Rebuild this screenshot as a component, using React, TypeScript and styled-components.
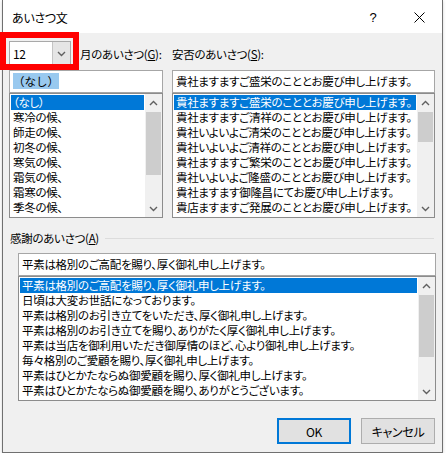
import styled, { createGlobalStyle } from 'styled-components';

const GlobalStyle = createGlobalStyle`
  html, body {
    margin: 0;
    padding: 0;
    background: #ffffff;
  }
  body {
    font-family: "Noto Sans CJK JP", "Noto Sans", sans-serif;
    font-size: 11.5px;
    letter-spacing: -0.3px;
    font-feature-settings: "palt";
    color: #000;
  }
`;

const Frame = styled.div`
  position: relative;
  margin-left: 2px;
  width: 441px;
  height: 453px;
  box-sizing: border-box;
  border: 1px solid #707070;
  border-top: none;
  background: #f0f0f0;
  display: flex;
  flex-direction: column;
  box-shadow: 0 1px 3px rgba(0, 0, 0, 0.18);
`;

const TitleBar = styled.div`
  height: 33px;
  flex-shrink: 0;
  background: #ffffff;
  display: flex;
  align-items: center;
  padding-left: 9px;
`;

const TitleText = styled.div`
  flex: 1;
  line-height: 15px;
  padding-top: 2px;
  font-size: 12px;
`;

const TitleButton = styled.div`
  width: 46px;
  height: 33px;
  display: flex;
  align-items: center;
  justify-content: center;
  font-family: "Liberation Sans", sans-serif;
  font-size: 13px;
  padding-top: 2px;
  box-sizing: border-box;
`;

const Body = styled.div`
  flex: 1;
  display: flex;
  flex-direction: column;
  padding: 8px 6px 8px 6px;
`;

const TopRow = styled.div`
  display: grid;
  grid-template-columns: 154px 263px;
  column-gap: 9px;
  height: 26px;
  align-items: center;
`;

const TopCell = styled.div`
  display: flex;
  align-items: center;
  height: 100%;
`;

const Label = styled.span<{ $indent?: number }>`
  margin-left: ${p => p.$indent ?? 0}px;
  line-height: 15px;
  white-space: nowrap;
`;

const Combo = styled.div`
  width: 62px;
  height: 26px;
  box-sizing: border-box;
  border: 1px solid #a9a9a9;
  background: #ffffff;
  display: flex;
`;

const ComboText = styled.div`
  flex: 1;
  padding-left: 3px;
  line-height: 24px;
  font-size: 12px;
`;

const ComboButton = styled.div`
  width: 17px;
  background: #e5e5e5;
  border-left: 1px solid #c4c4c4;
  display: flex;
  align-items: center;
  justify-content: center;
`;

const Marker = styled.div`
  position: absolute;
  left: -3px;
  top: 32px;
  width: 79px;
  height: 38px;
  box-sizing: border-box;
  border: 6px solid #ff0000;
  pointer-events: none;
`;

const Columns = styled.div`
  margin-top: 3px;
  display: grid;
  grid-template-columns: 154px 263px;
  column-gap: 9px;
`;

const Stack = styled.div<{ $indent?: number }>`
  display: flex;
  flex-direction: column;
  margin-left: ${p => p.$indent ?? 0}px;
`;

const Edit = styled.div`
  height: 23px;
  box-sizing: border-box;
  border: 1px solid #a6a6a6;
  background: #ffffff;
  padding-left: 3px;
  line-height: 20px;
  white-space: nowrap;
  overflow: hidden;
`;

const EditSel = styled.span`
  background: #99c9ef;
  font-feature-settings: normal;
  letter-spacing: 0;
`;

const List = styled.div`
  height: 125px;
  box-sizing: border-box;
  border: 1px solid #8c8c8c;
  background: #ffffff;
  display: flex;
`;

const Items = styled.div`
  flex: 1;
  padding: 1px;
  overflow: hidden;
`;

const Item = styled.div<{ $selected?: boolean }>`
  height: 15px;
  line-height: 15px;
  padding-left: 2px;
  white-space: nowrap;
  overflow: hidden;
  background: ${p => (p.$selected ? '#0078d7' : 'transparent')};
  color: ${p => (p.$selected ? '#ffffff' : '#000000')};
`;

const Scroll = styled.div`
  width: 17px;
  background: #f0f0f0;
  display: flex;
  flex-direction: column;
`;

const Arrow = styled.div`
  height: 17px;
  display: flex;
  align-items: center;
  justify-content: center;
`;

const Track = styled.div`
  flex: 1;
  display: flex;
  flex-direction: column;
`;

const Thumb = styled.div`
  margin: 0 1px;
  background: #cdcdcd;
`;

const GroupHeader = styled.div`
  margin-top: 12px;
  height: 16px;
  display: flex;
  align-items: center;
  padding-left: 1px;
`;

const GroupLine = styled.div`
  flex: 1;
  height: 1px;
  margin-left: 6px;
  margin-right: 2px;
  background: #dcdcdc;
`;

const Buttons = styled.div`
  margin-top: 17px;
  display: flex;
  justify-content: flex-end;
  gap: 10px;
  padding-right: 1px;
`;

const Button = styled.div<{ $default?: boolean }>`
  width: 74px;
  height: 26px;
  box-sizing: border-box;
  background: #e1e1e1;
  border: ${p => (p.$default ? '2px solid #0078d7' : '1px solid #adadad')};
  display: flex;
  align-items: center;
  justify-content: center;
  line-height: 15px;
  font-size: 12px;
`;

const Chevron = ({ up }: { up?: boolean }) => (
  <svg width="9" height="6" viewBox="0 0 9 6">
    <polyline
      points={up ? '1,5 4.5,1.5 8,5' : '1,1 4.5,4.5 8,1'}
      fill="none"
      stroke="#606060"
      strokeWidth="1.4"
    />
  </svg>
);

type ListProps = {
  items: string[];
  thumbTop: number;
  thumbSize: number;
};

const ListBox = ({ items, thumbTop, thumbSize }: ListProps) => (
  <List>
    <Items>
      {items.map((t, i) => (
        <Item key={i} $selected={i === 0}>
          {t}
        </Item>
      ))}
    </Items>
    <Scroll>
      <Arrow>
        <Chevron up />
      </Arrow>
      <Track>
        <Thumb style={{ marginTop: thumbTop, height: thumbSize }} />
      </Track>
      <Arrow>
        <Chevron />
      </Arrow>
    </Scroll>
  </List>
);

const months = [
  '（なし）',
  '寒冷の候、',
  '師走の候、',
  '初冬の候、',
  '寒気の候、',
  '霜気の候、',
  '霜寒の候、',
  '季冬の候、',
];

const wishes = [
  '貴社ますますご盛栄のこととお慶び申し上げます。',
  '貴社ますますご清祥のこととお慶び申し上げます。',
  '貴社いよいよご清栄のこととお慶び申し上げます。',
  '貴社いよいよご清祥のこととお慶び申し上げます。',
  '貴社ますますご繁栄のこととお慶び申し上げます。',
  '貴社いよいよご隆盛のこととお慶び申し上げます。',
  '貴社ますます御隆昌にてお慶び申し上げます。',
  '貴店ますますご発展のこととお慶び申し上げます。',
];

const thanks = [
  '平素は格別のご高配を賜り、厚く御礼申し上げます。',
  '日頃は大変お世話になっております。',
  '平素は格別のお引き立てをいただき、厚く御礼申し上げます。',
  '平素は格別のお引き立てを賜り、ありがたく厚く御礼申し上げます。',
  '平素は当店を御利用いただき御厚情のほど、心より御礼申し上げます。',
  '毎々格別のご愛顧を賜り、厚く御礼申し上げます。',
  '平素はひとかたならぬ御愛顧を賜り、厚く御礼申し上げます。',
  '平素はひとかたならぬ御愛顧を賜り、ありがとうございます。',
];

const App = () => {
  return (
    <>
      <GlobalStyle />
      <Frame>
        <TitleBar>
          <TitleText>あいさつ文</TitleText>
          <TitleButton>?</TitleButton>
          <TitleButton>
            <svg width="11" height="11" viewBox="0 0 11 11">
              <path d="M0.5 0.5 L10.5 10.5 M10.5 0.5 L0.5 10.5" stroke="#000" strokeWidth="1" />
            </svg>
          </TitleButton>
        </TitleBar>

        <Body>
          <TopRow>
            <TopCell>
              <Combo>
                <ComboText>12</ComboText>
                <ComboButton>
                  <Chevron />
                </ComboButton>
              </Combo>
              <Label $indent={9}>
                月のあいさつ(<u>G</u>):
              </Label>
            </TopCell>
            <TopCell>
              <Label>
                安否のあいさつ(<u>S</u>):
              </Label>
            </TopCell>
          </TopRow>

          <Columns>
            <Stack>
              <Edit>
                <EditSel>（なし）</EditSel>
              </Edit>
              <ListBox items={months} thumbTop={1} thumbSize={63} />
            </Stack>
            <Stack>
              <Edit>{wishes[0]}</Edit>
              <ListBox items={wishes} thumbTop={1} thumbSize={30} />
            </Stack>
          </Columns>

          <GroupHeader>
            <Label>
              感謝のあいさつ(<u>A</u>)
            </Label>
            <GroupLine />
          </GroupHeader>

          <Stack $indent={9} style={{ marginTop: 7 }}>
            <Edit>{thanks[0]}</Edit>
            <ListBox items={thanks} thumbTop={1} thumbSize={62} />
          </Stack>

          <Buttons>
            <Button $default>OK</Button>
            <Button>キャンセル</Button>
          </Buttons>
        </Body>

        <Marker />
      </Frame>
    </>
  );
};

export default App;
